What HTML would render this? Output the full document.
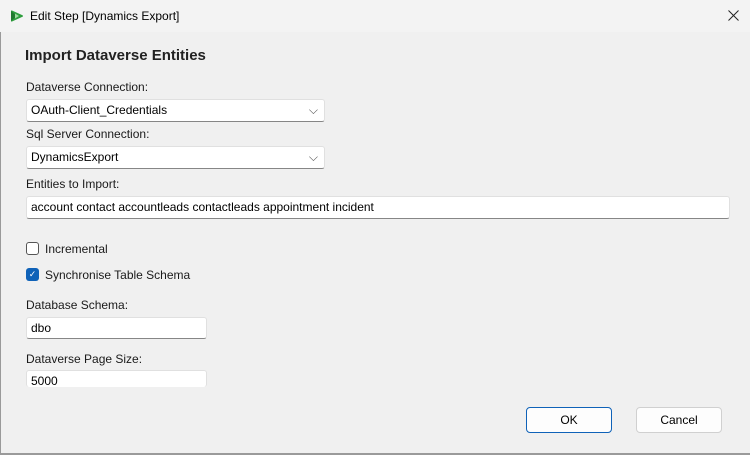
<!DOCTYPE html>
<html><head><style>
*{box-sizing:border-box;margin:0;padding:0}
body{width:750px;height:455px;background:#f0f0f0;font-family:"Liberation Sans",sans-serif;font-size:12px;color:#000;position:relative;overflow:hidden}
.a{position:absolute}
.title{left:0;top:0;width:750px;height:32px;background:#f3f3f3}
.lbl{font-size:12px;color:#1a1a1a}
.box{background:#fff;border:1px solid #e0e0e0;border-bottom:1px solid #868686;border-radius:3px;padding-left:4px;line-height:20px;font-size:12px}
.btn{background:#fdfdfd;border:1px solid #d0d0d0;border-radius:4px;text-align:center;line-height:23px;font-size:12px}
</style></head><body>
<div class="a" style="left:0;top:0;width:1px;height:455px;background:#9a9a9a"></div>
<div class="a title"></div>
<svg class="a" style="left:9px;top:8px" width="16" height="16" viewBox="0 0 16 16"><path d="M3 2.5 Q2 2 2 3.5 L2 12.5 Q2 14 3 13.5 L13.5 8.8 Q14.5 8 13.5 7.2 Z" fill="#2e9e3e"/><path d="M2 3 L8 8 L2 13 Z" fill="#1f7a2e"/><path d="M6 5.5 L10 8 L6 10.5Z" fill="#9fdc9f"/></svg>
<div class="a" style="left:30px;top:9px;font-size:12px">Edit Step [Dynamics Export]</div>
<svg class="a" style="left:728px;top:10px" width="11" height="11" viewBox="0 0 11 11"><path d="M0.5 0.5 L10.5 10.5 M10.5 0.5 L0.5 10.5" stroke="#222" stroke-width="1"/></svg>
<div class="a" style="left:25px;top:47px;font-size:15px;font-weight:bold;color:#222">Import Dataverse Entities</div>
<div class="a lbl" style="left:26px;top:80px">Dataverse Connection:</div>
<div class="a box" style="left:26px;top:99px;width:299px;height:23px">OAuth-Client_Credentials<span style="position:absolute;right:6px;top:0;color:#555">⌵</span></div>
<div class="a lbl" style="left:26px;top:127px">Sql Server Connection:</div>
<div class="a box" style="left:26px;top:146px;width:299px;height:23px">DynamicsExport<span style="position:absolute;right:6px;top:0;color:#555">⌵</span></div>
<div class="a lbl" style="left:26px;top:177px">Entities to Import:</div>
<div class="a box" style="left:26px;top:196px;width:704px;height:23px">account contact accountleads contactleads appointment incident</div>
<div class="a" style="left:26px;top:242px;width:13px;height:13px;border:1px solid #555;border-radius:3px;background:#fff"></div>
<div class="a lbl" style="left:45px;top:242px">Incremental</div>
<div class="a" style="left:26px;top:268px;width:13px;height:13px;border-radius:3px;background:#0f62b8;color:#fff;font-size:9px;line-height:13px;text-align:center">✓</div>
<div class="a lbl" style="left:45px;top:268px">Synchronise Table Schema</div>
<div class="a lbl" style="left:26px;top:298px">Database Schema:</div>
<div class="a box" style="left:26px;top:317px;width:181px;height:22px">dbo</div>
<div class="a lbl" style="left:26px;top:352px">Dataverse Page Size:</div>
<div class="a box" style="left:26px;top:370px;width:181px;height:17px;border-bottom:none;line-height:20px">5000</div>
<div class="a btn" style="left:526px;top:407px;width:86px;height:26px;border:1px solid #0f62b8;line-height:24px">OK</div>
<div class="a btn" style="left:636px;top:407px;width:86px;height:26px;line-height:24px">Cancel</div>
<div class="a" style="left:0;top:453px;width:750px;height:2px;background:#9a9a9a"></div>
</body></html>
